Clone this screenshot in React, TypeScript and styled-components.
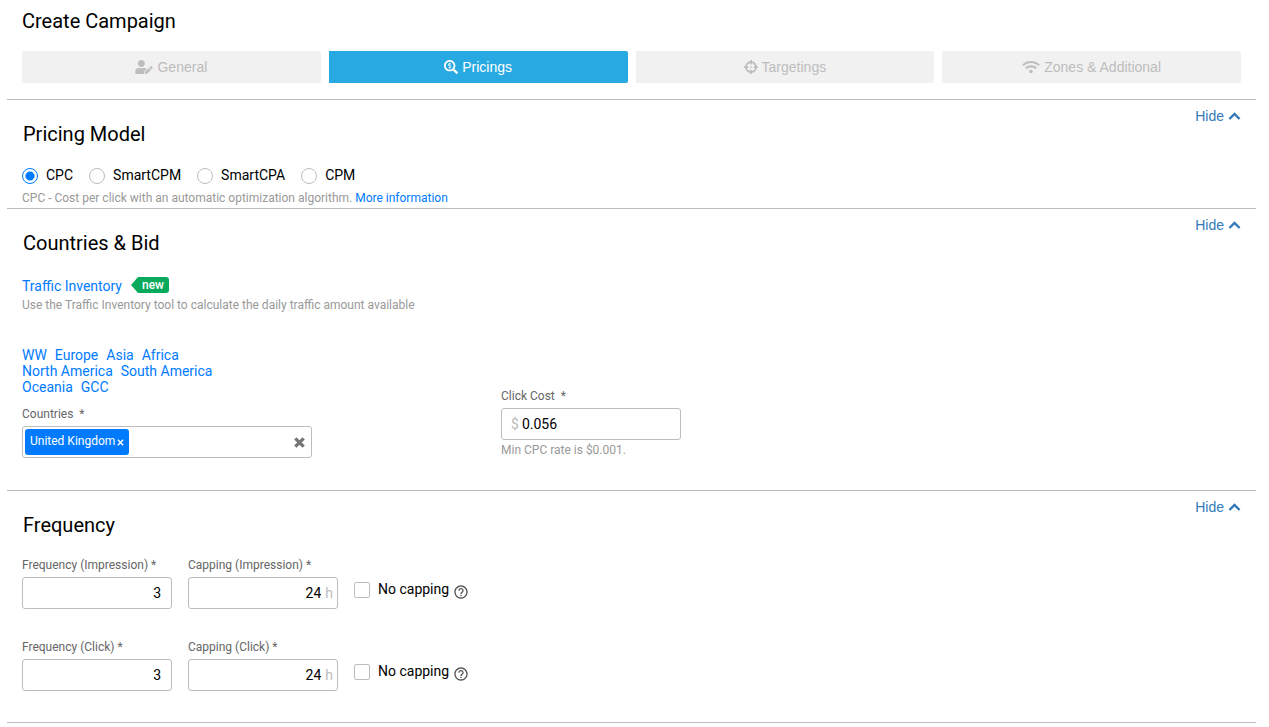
import { useState } from "react";
import type { ReactNode } from "react";
import styled, { createGlobalStyle } from "styled-components";
import { FaUserEdit, FaSearchDollar, FaCrosshairs, FaWifi } from "react-icons/fa";
import { MdHelpOutline } from "react-icons/md";

const GlobalStyle = createGlobalStyle`
  * { box-sizing: border-box; }
  body {
    margin: 0;
    background: #fff;
    color: #000;
    font: 14px/20px Roboto, "Liberation Sans", sans-serif;
  }
  button, input { font: inherit; color: inherit; }
  a { color: #007bff; text-decoration: none; }
`;

const Page = styled.main`
  padding: 10px 13px 0 7px;
`;

const PageTitle = styled.h1`
  margin: 0 0 19px;
  padding: 0 15px;
  font-size: 20px;
  line-height: 22px;
  font-weight: 400;
`;

const Steps = styled.nav`
  display: grid;
  grid-template-columns: repeat(4, 1fr);
  gap: 8px;
  padding: 0 15px 16px;
`;

const Step = styled.button<{ $active?: boolean; $wideIcon?: boolean }>`
  display: flex;
  align-items: center;
  justify-content: center;
  gap: 4px;
  height: 32px;
  padding: 0;
  border: 0;
  border-radius: 0 2px 2px 0;
  font-family: "Liberation Sans", Arial, sans-serif;
  background: ${(p) => (p.$active ? "#29a9e1" : "#f1f1f1")};
  color: ${(p) => (p.$active ? "#fff" : "#bdbdbd")};
  svg { height: 14px; width: ${(p) => (p.$wideIcon ? 18 : 14)}px; }
`;

const Panel = styled.section`
  padding: 0 15px;
  border-top: 1px solid #bdbdbd;
  &:last-child { border-bottom: 1px solid #bdbdbd; }
`;

const PanelHeader = styled.header`
  display: flex;
  justify-content: space-between;
  align-items: flex-start;
  padding-top: 6px;
`;

const PanelTitle = styled.h2`
  margin: 17px 0 0 1px;
  font-size: 20px;
  line-height: 22px;
  font-weight: 400;
`;

const HideButton = styled.button`
  display: flex;
  align-items: center;
  gap: 4px;
  padding: 0;
  border: 0;
  background: none;
  color: #337ab7;
  font-family: "Liberation Sans", Arial, sans-serif;
  line-height: 20px;
`;

const RadioRow = styled.div`
  display: flex;
  gap: 16px;
  padding-top: 20px;
`;

const Choice = styled.label`
  display: flex;
  align-items: center;
  gap: 8px;
  line-height: 20px;
`;

const Radio = styled.input`
  appearance: none;
  width: 16px;
  height: 16px;
  margin: 2px 0 0;
  border: 1px solid #bdbdbd;
  border-radius: 50%;
  background: #fff;
  &:checked {
    border-color: #007bff;
    background: radial-gradient(circle, #007bff 4px, #fff 5px);
  }
`;

const Hint = styled.p`
  margin: 0;
  color: #999;
  font-size: 12px;
  line-height: 16px;
`;

const PricingBody = styled.div`
  padding-bottom: 2px;
  ${Hint} { margin-top: 5px; }
`;

const BidBody = styled.div`
  padding: 22px 0 32px;
`;

const InventoryRow = styled.div`
  display: flex;
  align-items: center;
  gap: 9px;
  height: 20px;
  margin-bottom: 1px;
`;

const Badge = styled.span`
  height: 16px;
  margin-bottom: 2px;
  padding: 0 5px 0 11px;
  border-radius: 3px;
  background: #0aaa5c;
  color: #fff;
  font-size: 12px;
  line-height: 16px;
  font-weight: 500;
  clip-path: polygon(0 50%, 7px 0, 100% 0, 100% 100%, 7px 100%);
`;

const BidColumns = styled.div`
  display: grid;
  grid-template-columns: 290px 180px;
  column-gap: 189px;
  align-items: end;
  margin-top: 34px;
  ${Hint} { margin-top: 2px; }
`;

const Regions = styled.div`
  margin-bottom: 11px;
`;

const RegionLine = styled.div`
  display: flex;
  gap: 8px;
  line-height: 16px;
`;

const FieldLabel = styled.label`
  display: block;
  margin-bottom: 4px;
  color: #666;
  font-size: 12px;
  line-height: 16px;
  white-space: pre;
`;

const Control = styled.div`
  display: flex;
  align-items: center;
  height: 32px;
  border: 1px solid #bdbdbd;
  border-radius: 3px;
  background: #fff;
`;

const TextInput = styled.input<{ $right?: boolean }>`
  flex: 1;
  min-width: 0;
  height: 100%;
  padding: 0;
  border: 0;
  outline: 0;
  background: transparent;
  text-align: ${(p) => (p.$right ? "right" : "left")};
`;

const Prefix = styled.span`
  padding: 0 3px 0 9px;
  color: #bdbdbd;
`;

const Suffix = styled.span`
  padding: 0 4px;
  color: #bdbdbd;
`;

const EndSpace = styled.span`
  width: 10px;
`;

const Tag = styled.span`
  display: flex;
  align-items: center;
  gap: 2px;
  height: 26px;
  margin: 0 4px 0 2px;
  padding: 0 5px 2px;
  border-radius: 3px;
  background: #007bff;
  color: #fff;
  font-size: 12px;
  white-space: nowrap;
`;

const IconButton = styled.button`
  display: flex;
  padding: 0;
  border: 0;
  background: none;
`;

const TagRemove = styled(IconButton)`
  margin-top: 2px;
`;

const ClearButton = styled(IconButton)`
  margin-right: 6px;
  color: #757575;
`;

const FrequencyBody = styled.div`
  display: grid;
  gap: 30px;
  padding: 21px 0 31px;
`;

const CapRow = styled.div`
  display: grid;
  grid-template-columns: 150px 150px auto;
  column-gap: 16px;
  justify-content: start;
  align-items: end;
`;

const CapToggle = styled.div`
  display: flex;
  align-items: center;
  gap: 4px;
  margin-bottom: 9px;
  svg { margin-top: 6px; color: #555; }
`;

const Checkbox = styled.input`
  appearance: none;
  width: 16px;
  height: 16px;
  margin: 2px 0 0;
  border: 1px solid #bdbdbd;
  border-radius: 2px;
  background: #fff;
  &:checked { background: #007bff; border-color: #007bff; }
`;

function Cross({ size, weight }: { size: number; weight: number }) {
  return (
    <svg width={size} height={size} viewBox="0 0 10 10" aria-hidden="true">
      <path d="M1.2 1.2 8.8 8.8M8.8 1.2 1.2 8.8" stroke="currentColor" strokeWidth={weight} />
    </svg>
  );
}

function CollapsiblePanel({ title, children }: { title: string; children: ReactNode }) {
  const [open, setOpen] = useState(true);
  return (
    <Panel>
      <PanelHeader>
        <PanelTitle>{title}</PanelTitle>
        <HideButton type="button" aria-expanded={open} onClick={() => setOpen(!open)}>
          {open ? "Hide" : "Show"}
          <svg width="13" height="10" viewBox="0 0 13 10" aria-hidden="true">
            <path d="M1.4 8 6.5 2.9 11.6 8" fill="none" stroke="currentColor" strokeWidth="2.4" />
          </svg>
        </HideButton>
      </PanelHeader>
      {open && children}
    </Panel>
  );
}

const models = ["CPC", "SmartCPM", "SmartCPA", "CPM"];
const regions = [["WW", "Europe", "Asia", "Africa"], ["North America", "South America"], ["Oceania", "GCC"]];

export default function App() {
  return (
    <>
      <GlobalStyle />
      <Page>
        <PageTitle>Create Campaign</PageTitle>
        <Steps>
          <Step type="button" $wideIcon><FaUserEdit />General</Step>
          <Step type="button" $active><FaSearchDollar />Pricings</Step>
          <Step type="button"><FaCrosshairs />Targetings</Step>
          <Step type="button" $wideIcon><FaWifi />Zones &amp; Additional</Step>
        </Steps>

        <CollapsiblePanel title="Pricing Model">
          <PricingBody>
            <RadioRow>
              {models.map((m) => (
                <Choice key={m}>
                  <Radio type="radio" name="model" value={m} defaultChecked={m === "CPC"} />
                  {m}
                </Choice>
              ))}
            </RadioRow>
            <Hint>
              CPC - Cost per click with an automatic optimization algorithm. <a href="#more">More information</a>
            </Hint>
          </PricingBody>
        </CollapsiblePanel>

        <CollapsiblePanel title="Countries &amp; Bid">
          <BidBody>
            <InventoryRow>
              <a href="#inventory">Traffic Inventory</a>
              <Badge>new</Badge>
            </InventoryRow>
            <Hint>Use the Traffic Inventory tool to calculate the daily traffic amount available</Hint>
            <BidColumns>
              <div>
                <Regions>
                  {regions.map((line) => (
                    <RegionLine key={line[0]}>
                      {line.map((r) => <a key={r} href="#region">{r}</a>)}
                    </RegionLine>
                  ))}
                </Regions>
                <FieldLabel htmlFor="countries">{"Countries  *"}</FieldLabel>
                <Control>
                  <Tag>
                    United Kingdom
                    <TagRemove type="button" aria-label="Remove United Kingdom"><Cross size={7} weight={2} /></TagRemove>
                  </Tag>
                  <TextInput id="countries" type="text" />
                  <ClearButton type="button" aria-label="Clear countries"><Cross size={11} weight={3} /></ClearButton>
                </Control>
              </div>
              <div>
                <FieldLabel htmlFor="cost">{"Click Cost  *"}</FieldLabel>
                <Control>
                  <Prefix>$</Prefix>
                  <TextInput id="cost" type="text" defaultValue="0.056" />
                </Control>
                <Hint>Min CPC rate is $0.001.</Hint>
              </div>
            </BidColumns>
          </BidBody>
        </CollapsiblePanel>

        <CollapsiblePanel title="Frequency">
          <FrequencyBody>
            {["Impression", "Click"].map((kind) => (
              <CapRow key={kind}>
                <div>
                  <FieldLabel htmlFor={`freq-${kind}`}>{`Frequency (${kind}) *`}</FieldLabel>
                  <Control>
                    <TextInput id={`freq-${kind}`} type="text" defaultValue="3" $right />
                    <EndSpace />
                  </Control>
                </div>
                <div>
                  <FieldLabel htmlFor={`cap-${kind}`}>{`Capping (${kind}) *`}</FieldLabel>
                  <Control>
                    <TextInput id={`cap-${kind}`} type="text" defaultValue="24" $right />
                    <Suffix>h</Suffix>
                  </Control>
                </div>
                <CapToggle>
                  <Choice>
                    <Checkbox type="checkbox" />
                    No capping
                  </Choice>
                  <MdHelpOutline size={16} />
                </CapToggle>
              </CapRow>
            ))}
          </FrequencyBody>
        </CollapsiblePanel>
      </Page>
    </>
  );
}
